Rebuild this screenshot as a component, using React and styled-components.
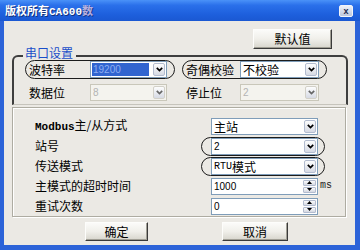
import React from 'react';
import styled, { createGlobalStyle } from 'styled-components';

const GlobalStyle = createGlobalStyle`
  html, body {
    margin: 0;
    padding: 0;
    background: #ebe9e4;
  }
  body {
    font-family: "Noto Sans CJK SC", "Liberation Sans", sans-serif;
    font-size: 12px;
    line-height: 14px;
    color: #000;
  }
`;

const Window = styled.div`
  width: 360px;
  height: 250px;
  display: flex;
  flex-direction: column;
  overflow: hidden;
`;

const TitleBar = styled.div`
  height: 21px;
  flex-shrink: 0;
  display: flex;
  align-items: center;
  justify-content: space-between;
  padding: 0 7px 0 5px;
  background: linear-gradient(#4a92f8 0%, #2a70ea 25%, #1d5fdc 70%, #1a58d2 100%);
`;

const TitleText = styled.div`
  color: #fff;
  font-weight: bold;
  font-size: 11px;
  line-height: 12px;
  text-shadow: 1px 1px 0 #10307a;
  white-space: nowrap;
`;

const Mono = styled.span`
  font-family: "Liberation Mono", monospace;
  font-size: ${p => p.$size || 11}px;
  font-weight: ${p => (p.$bold ? 'bold' : 'normal')};
`;

const Faded = styled.span`
  color: #e9c8dc;
  opacity: 0.75;
`;

const CloseBox = styled.div`
  width: 14px;
  height: 12px;
  box-sizing: border-box;
  border: 1px solid #f2f4fa;
  border-radius: 2px;
  background: linear-gradient(#eef1f8, #bcc6dc);
  color: #1d2a50;
  font-family: "Liberation Sans", sans-serif;
  font-weight: bold;
  font-size: 9px;
  line-height: 10px;
  text-align: center;
`;

const Frame = styled.div`
  flex: 1;
  display: flex;
  flex-direction: column;
  background: #ebe9e4;
  border-left: 4px solid #2c63d8;
  border-right: 5px solid #2c63d8;
  border-bottom: 5px solid #2c63d8;
`;

const TopRow = styled.div`
  display: flex;
  justify-content: flex-end;
  padding: 8px 23px 0 0;
`;

const Button = styled.button`
  width: ${p => p.$w}px;
  height: ${p => p.$h || 19}px;
  box-sizing: border-box;
  padding: 0;
  border: 1px solid;
  border-color: #fdfdfb #3a3a3a #3a3a3a #fdfdfb;
  box-shadow: inset -1px -1px 0 #a09e94;
  background: linear-gradient(#fbfbf9 0%, #f0efea 50%, #d7d5cc 100%);
  font-family: "Noto Sans CJK SC", sans-serif;
  font-size: 12px;
  line-height: 14px;
  color: #000;
`;

const Group = styled.div`
  display: flex;
  flex-direction: column;
  margin: 6px 7px 0 8px;
  padding: 0 0 2px 11px;
  border: 2px solid #3e3e3e;
  border-bottom: 1px solid #c6c4bc;
  border-radius: 6px 6px 0 0;
`;

const Legend = styled.div`
  align-self: flex-start;
  margin: -10px 0 0 -2px;
  padding: 0 3px 0 2px;
  height: 12px;
  line-height: 12px;
  background: #ebe9e4;
  color: #1a4fc9;
  font-size: 12px;
`;

const FieldRows = styled.div`
  display: flex;
  flex-direction: column;
  gap: 4px;
  padding-top: 1px;
`;

const FieldRow = styled.div`
  display: flex;
  gap: 7px;
`;

const Field = styled.div`
  display: flex;
  align-items: center;
  height: 19px;
  box-sizing: border-box;
  padding: 0 7px 0 3px;
  border: 1px solid ${p => (p.$circled ? '#1c1c1c' : 'transparent')};
  border-radius: 10px;
`;

const Label = styled.div`
  width: ${p => (p.$w ? `${p.$w}px` : 'auto')};
  flex-shrink: 0;
  white-space: nowrap;
  line-height: 14px;
`;

const Combo = styled.div`
  display: flex;
  width: ${p => p.$w}px;
  height: 17px;
  box-sizing: border-box;
  flex-shrink: 0;
  border: 1px solid ${p => (p.$disabled ? '#c9c7ba' : '#7f9db9')};
  background: ${p => (p.$disabled ? '#f4f3ee' : '#fff')};
`;

const ComboText = styled.div`
  flex: 1;
  display: flex;
  align-items: center;
  margin: 1px 3px 1px 1px;
  padding-left: 1px;
  white-space: nowrap;
  background: ${p => (p.$selected ? '#3164cf' : 'transparent')};
  color: ${p => (p.$selected ? '#8eaef2' : p.$disabled ? '#b3b3b3' : '#000')};
  font-family: ${p => (p.$num ? '"Liberation Sans", sans-serif' : '"Noto Sans CJK SC", sans-serif')};
  font-size: ${p => (p.$num ? 10 : 12)}px;
  line-height: 13px;
`;

const DropButton = styled.div`
  width: 12px;
  margin: 1px;
  box-sizing: border-box;
  display: flex;
  align-items: center;
  justify-content: center;
  border: 1px solid ${p => (p.$disabled ? '#d2d0c8' : '#b3bccf')};
  border-radius: 2px;
  background: linear-gradient(#fdfdfd, #d6dae4);
`;

const SpinButtons = styled.div`
  width: 13px;
  margin: 1px;
  display: flex;
  flex-direction: column;
  gap: 1px;
`;

const SpinHalf = styled.div`
  flex: 1;
  display: flex;
  align-items: center;
  justify-content: center;
  border: 1px solid #b3bccf;
  border-radius: 1px;
  background: linear-gradient(#fbfbfb, #d4d8e2);
`;

const Panel = styled.div`
  margin: 2px 9px 0 8px;
  padding: 9px 0 1px 22px;
  border: 1px solid #aeaca2;
  box-shadow: inset 1px 1px 0 #fff, 1px 1px 0 #fff;
  display: grid;
  grid-template-columns: 176px 107px auto;
  grid-auto-rows: 18px;
  row-gap: 2px;
  align-items: center;
`;

const Ring = styled.div`
  display: flex;
  align-items: center;
  margin: -1px -7px -1px -10px;
  padding: 0 6px 0 9px;
  border: 1px solid #1c1c1c;
  border-radius: 10px;
`;

const Unit = styled.div`
  padding-left: 2px;
  font-family: "Liberation Mono", monospace;
  font-size: 10px;
  color: #222;
`;

const ButtonRow = styled.div`
  display: flex;
  gap: 74px;
  padding: 5px 0 0 81px;
`;

const Chevron = ({ color = '#000' }) => (
  <svg width="7" height="5" viewBox="0 0 7 5">
    <path d="M0.8 0.9 L3.5 3.6 L6.2 0.9" fill="none" stroke={color} strokeWidth="1.7" />
  </svg>
);

const Select = ({ w, value, num, selected, disabled }) => (
  <Combo $w={w} $disabled={disabled}>
    <ComboText $num={num} $selected={selected} $disabled={disabled}>{value}</ComboText>
    <DropButton $disabled={disabled}>
      <Chevron color={disabled ? '#666' : '#000'} />
    </DropButton>
  </Combo>
);

const Spinner = ({ w, value }) => (
  <Combo $w={w}>
    <ComboText $num>{value}</ComboText>
    <SpinButtons>
      <SpinHalf>
        <svg width="5" height="3" viewBox="0 0 5 3"><path d="M0 3 L2.5 0 L5 3 Z" fill="#000" /></svg>
      </SpinHalf>
      <SpinHalf>
        <svg width="5" height="3" viewBox="0 0 5 3"><path d="M0 0 L2.5 3 L5 0 Z" fill="#000" /></svg>
      </SpinHalf>
    </SpinButtons>
  </Combo>
);

export default function App() {
  return (
    <>
      <GlobalStyle />
      <Window>
        <TitleBar>
          <TitleText>
            版权所有<Mono $bold>CA600</Mono><Faded>数</Faded>
          </TitleText>
          <CloseBox>x</CloseBox>
        </TitleBar>
        <Frame>
          <TopRow>
            <Button $w={79} $h={20}>默认值</Button>
          </TopRow>

          <Group>
            <Legend>串口设置</Legend>
            <FieldRows>
              <FieldRow>
                <Field $circled>
                  <Label $w={61}>波特率</Label>
                  <Select w={77} value="19200" num selected />
                </Field>
                <Field $circled>
                  <Label $w={54}>奇偶校验</Label>
                  <Select w={79} value="不校验" />
                </Field>
              </FieldRow>
              <FieldRow>
                <Field>
                  <Label $w={61}>数据位</Label>
                  <Select w={77} value="8" num disabled />
                </Field>
                <Field>
                  <Label $w={54}>停止位</Label>
                  <Select w={79} value="2" num disabled />
                </Field>
              </FieldRow>
            </FieldRows>
          </Group>

          <Panel>
            <Label><Mono $bold>Modbus</Mono>主/从方式</Label>
            <Select w={107} value="主站" />
            <span />

            <Label>站号</Label>
            <Ring>
              <Select w={107} value="2" num />
            </Ring>
            <span />

            <Label>传送模式</Label>
            <Ring>
              <Select w={107} value={<><Mono $size={10}>RTU</Mono>模式</>} />
            </Ring>
            <span />

            <Label>主模式的超时时间</Label>
            <Spinner w={107} value="1000" />
            <Unit>ms</Unit>

            <Label>重试次数</Label>
            <Spinner w={107} value="0" />
            <span />
          </Panel>

          <ButtonRow>
            <Button $w={63}>确定</Button>
            <Button $w={66}>取消</Button>
          </ButtonRow>
        </Frame>
      </Window>
    </>
  );
}
